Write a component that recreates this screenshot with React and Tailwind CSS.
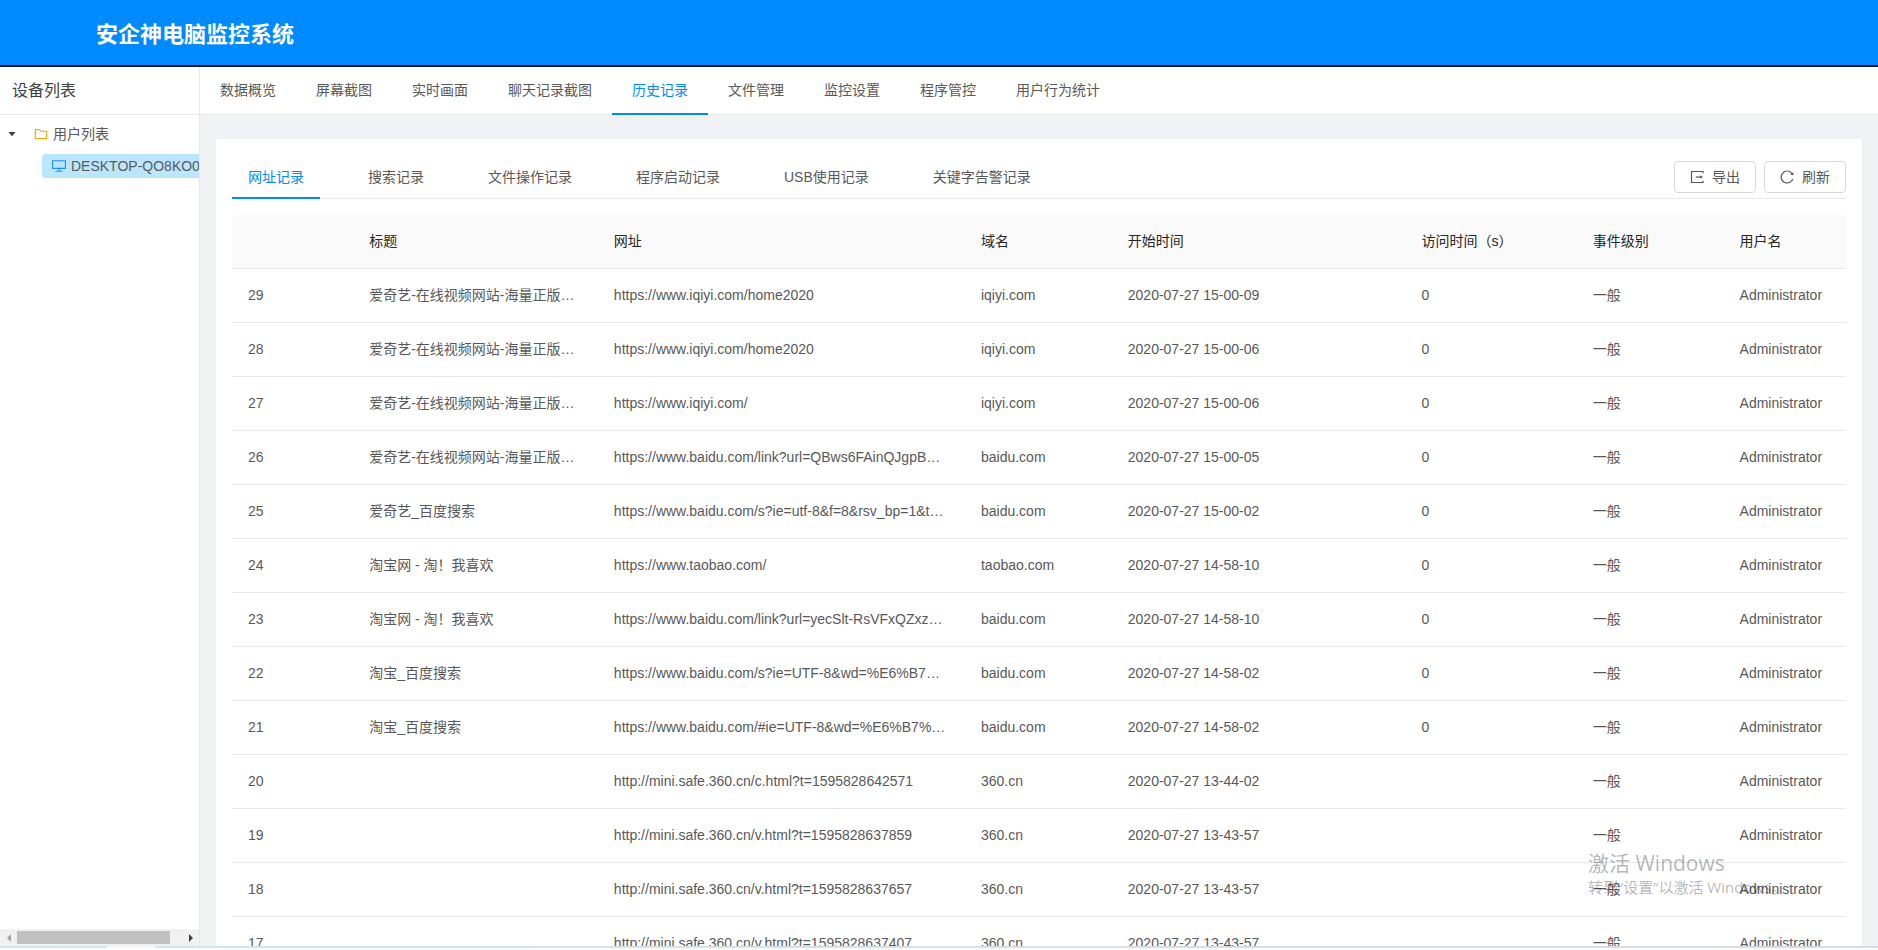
import React from "react";
import {
  AiFillCaretDown,
  AiOutlineDesktop,
  AiOutlineFolder,
  AiOutlineReload,
} from "react-icons/ai";

const mainTabs = [
  "数据概览",
  "屏幕截图",
  "实时画面",
  "聊天记录截图",
  "历史记录",
  "文件管理",
  "监控设置",
  "程序管控",
  "用户行为统计",
];

const recordTabs = [
  "网址记录",
  "搜索记录",
  "文件操作记录",
  "程序启动记录",
  "USB使用记录",
  "关键字告警记录",
];

const columns = [
  { label: "", width: "w-[99px]" },
  { label: "标题", width: "w-[200px]" },
  { label: "网址", width: "w-[300px]" },
  { label: "域名", width: "w-[120px]" },
  { label: "开始时间", width: "w-[240px]" },
  { label: "访问时间（s）", width: "w-[140px]" },
  { label: "事件级别", width: "w-[120px]" },
  { label: "用户名", width: "w-[100px]" },
];

const iqiyi = "爱奇艺-在线视频网站-海量正版高清视频在线观看";

const rows = [
  [29, iqiyi, "https://www.iqiyi.com/home2020", "iqiyi.com", "2020-07-27 15-00-09", "0"],
  [28, iqiyi, "https://www.iqiyi.com/home2020", "iqiyi.com", "2020-07-27 15-00-06", "0"],
  [27, iqiyi, "https://www.iqiyi.com/", "iqiyi.com", "2020-07-27 15-00-06", "0"],
  [26, iqiyi, "https://www.baidu.com/link?url=QBws6FAinQJgpBWmQxkz", "baidu.com", "2020-07-27 15-00-05", "0"],
  [25, "爱奇艺_百度搜索", "https://www.baidu.com/s?ie=utf-8&f=8&rsv_bp=1&tn=baidu", "baidu.com", "2020-07-27 15-00-02", "0"],
  [24, "淘宝网 - 淘！我喜欢", "https://www.taobao.com/", "taobao.com", "2020-07-27 14-58-10", "0"],
  [23, "淘宝网 - 淘！我喜欢", "https://www.baidu.com/link?url=yecSlt-RsVFxQZxzWmkQ", "baidu.com", "2020-07-27 14-58-10", "0"],
  [22, "淘宝_百度搜索", "https://www.baidu.com/s?ie=UTF-8&wd=%E6%B7%98%E5%AE%9D", "baidu.com", "2020-07-27 14-58-02", "0"],
  [21, "淘宝_百度搜索", "https://www.baidu.com/#ie=UTF-8&wd=%E6%B7%98%E5%AE%9D", "baidu.com", "2020-07-27 14-58-02", "0"],
  [20, "", "http://mini.safe.360.cn/c.html?t=1595828642571", "360.cn", "2020-07-27 13-44-02", ""],
  [19, "", "http://mini.safe.360.cn/v.html?t=1595828637859", "360.cn", "2020-07-27 13-43-57", ""],
  [18, "", "http://mini.safe.360.cn/v.html?t=1595828637657", "360.cn", "2020-07-27 13-43-57", ""],
  [17, "", "http://mini.safe.360.cn/v.html?t=1595828637407", "360.cn", "2020-07-27 13-43-57", ""],
];

function ExportIcon({ className }) {
  return (
    <svg viewBox="0 0 16 16" className={className} fill="none" stroke="currentColor" strokeWidth="1.2">
      <path d="M14 4.2V2.5H2.5v11H14v-1.7" />
      <path d="M6.8 8h5.6" />
      <path d="M11.4 6.2 13.9 8l-2.5 1.8z" fill="currentColor" stroke="none" />
    </svg>
  );
}

function Sidebar() {
  return (
    <aside className="flex w-[200px] shrink-0 flex-col border-r border-[#e8e8e8] bg-white">
      <h2 className="flex h-12 shrink-0 items-center border-b border-[#e8e8e8] px-3 text-base font-normal text-[#404040]">
        设备列表
      </h2>
      <div className="flex flex-1 flex-col gap-2 overflow-hidden pt-[7px]">
        <div className="flex h-6 items-center">
          <button type="button" aria-label="收起用户列表" className="flex w-6 justify-center text-[#404040]">
            <AiFillCaretDown className="size-2.5" />
          </button>
          <AiOutlineFolder className="ml-[9px] size-4 text-[#e0b000]" />
          <span className="ml-1 text-[#595959]">用户列表</span>
        </div>
        <a
          href="#device"
          className="ml-[42px] flex h-6 w-60 items-center gap-1 rounded-sm bg-[#bae7ff] pl-[9px] text-[#595959]"
        >
          <AiOutlineDesktop className="size-4 shrink-0 text-[#1890ff]" />
          DESKTOP-QO8KO0B
        </a>
      </div>
      <div className="flex h-[17px] shrink-0 items-center bg-[#f1f1f1]">
        <button type="button" aria-label="向左滚动" className="flex w-[17px] justify-center">
          <svg viewBox="0 0 4 8" className="h-2 w-1 fill-[#a3a3a3]">
            <path d="M4 0v8L0 4z" />
          </svg>
        </button>
        <div className="flex h-[13px] flex-1">
          <div className="w-[93%] bg-[#c1c1c1]" />
        </div>
        <button type="button" aria-label="向右滚动" className="flex w-[17px] justify-center">
          <svg viewBox="0 0 4 8" className="h-2 w-1 fill-[#404040]">
            <path d="M0 0v8l4-4z" />
          </svg>
        </button>
      </div>
    </aside>
  );
}

function ActionButton({ icon: Icon, children }) {
  return (
    <button
      type="button"
      className="flex h-8 items-center gap-[7px] rounded border border-[#d9d9d9] bg-white pr-[15px] pl-3.5 text-[#595959]"
    >
      <Icon className="size-4" />
      {children}
    </button>
  );
}

function RecordTable() {
  return (
    <table className="mt-4 w-full table-fixed border-separate border-spacing-0 text-left">
      <thead>
        <tr className="h-[54px]">
          {columns.map((c, i) => (
            <th
              key={i}
              className={`${c.width} border-b border-[#e8e8e8] bg-[#fafafa] px-4 pb-0.5 font-normal whitespace-nowrap text-[#262626] first:rounded-tl last:rounded-tr`}
            >
              {c.label}
            </th>
          ))}
        </tr>
      </thead>
      <tbody>
        {rows.map((r) => (
          <tr key={r[0]} className="h-[54px]">
            {[...r, "一般", "Administrator"].map((v, i) => (
              <td key={i} className="truncate border-b border-[#e8e8e8] px-4 pb-0.5 text-[#595959]">
                {v}
              </td>
            ))}
          </tr>
        ))}
      </tbody>
    </table>
  );
}

export default function App() {
  return (
    <div className="flex h-screen flex-col overflow-hidden bg-white font-['Liberation_Sans','Noto_Sans_CJK_SC',sans-serif] text-sm">
      <header className="flex h-[67px] shrink-0 items-center border-b-2 border-[#001529] bg-[#008aff] px-24 pt-1">
        <h1 className="text-[22px] leading-8 font-bold text-white">安企神电脑监控系统</h1>
      </header>

      <div className="flex min-h-0 flex-1">
        <Sidebar />
        <main className="flex min-w-0 flex-1 flex-col bg-[#f0f2f5]">
          <nav className="flex h-12 shrink-0 border-b border-[#e8e8e8] bg-white">
            {mainTabs.map((t) => (
              <a
                key={t}
                href="#tab"
                className={
                  t === "历史记录"
                    ? "-mb-px flex items-center border-b-2 border-[#008aff] px-5 text-[#008aff]"
                    : "-mb-px flex items-center border-b-2 border-transparent px-5 text-[#595959]"
                }
              >
                {t}
              </a>
            ))}
          </nav>

          <section className="mx-4 mt-6 min-h-0 flex-1 overflow-hidden bg-white px-4 pt-4">
            <div className="flex h-11 items-center border-b border-[#e8e8e8]">
              <nav className="flex h-11 flex-1 gap-8">
                {recordTabs.map((t, i) => (
                  <a
                    key={t}
                    href="#record"
                    className={
                      i === 0
                        ? "flex items-center border-b-2 border-[#008aff] px-4 pt-0.5 text-[#008aff]"
                        : "flex items-center border-b-2 border-transparent px-4 pt-0.5 text-[#595959]"
                    }
                  >
                    {t}
                  </a>
                ))}
              </nav>
              <div className="flex gap-2">
                <ActionButton icon={ExportIcon}>导出</ActionButton>
                <ActionButton icon={AiOutlineReload}>刷新</ActionButton>
              </div>
            </div>
            <RecordTable />
          </section>
        </main>
      </div>

      <footer className="flex h-1 shrink-0 flex-col">
        <div className="flex h-0.5 bg-linear-to-r from-[#cfe9ea] to-[#d5dbe8]">
          <div className="ml-[107px] w-12 bg-[#f3f8fa]" />
        </div>
      </footer>

      <div className="pointer-events-none absolute right-24 bottom-[51px] w-[194px] font-['Open_Sans','Noto_Sans_CJK_SC',sans-serif] whitespace-nowrap text-black/30">
        <p className="text-[21px] leading-6">激活 Windows</p>
        <p className="text-[15px] leading-6">转到“设置”以激活 Windows。</p>
      </div>
    </div>
  );
}
